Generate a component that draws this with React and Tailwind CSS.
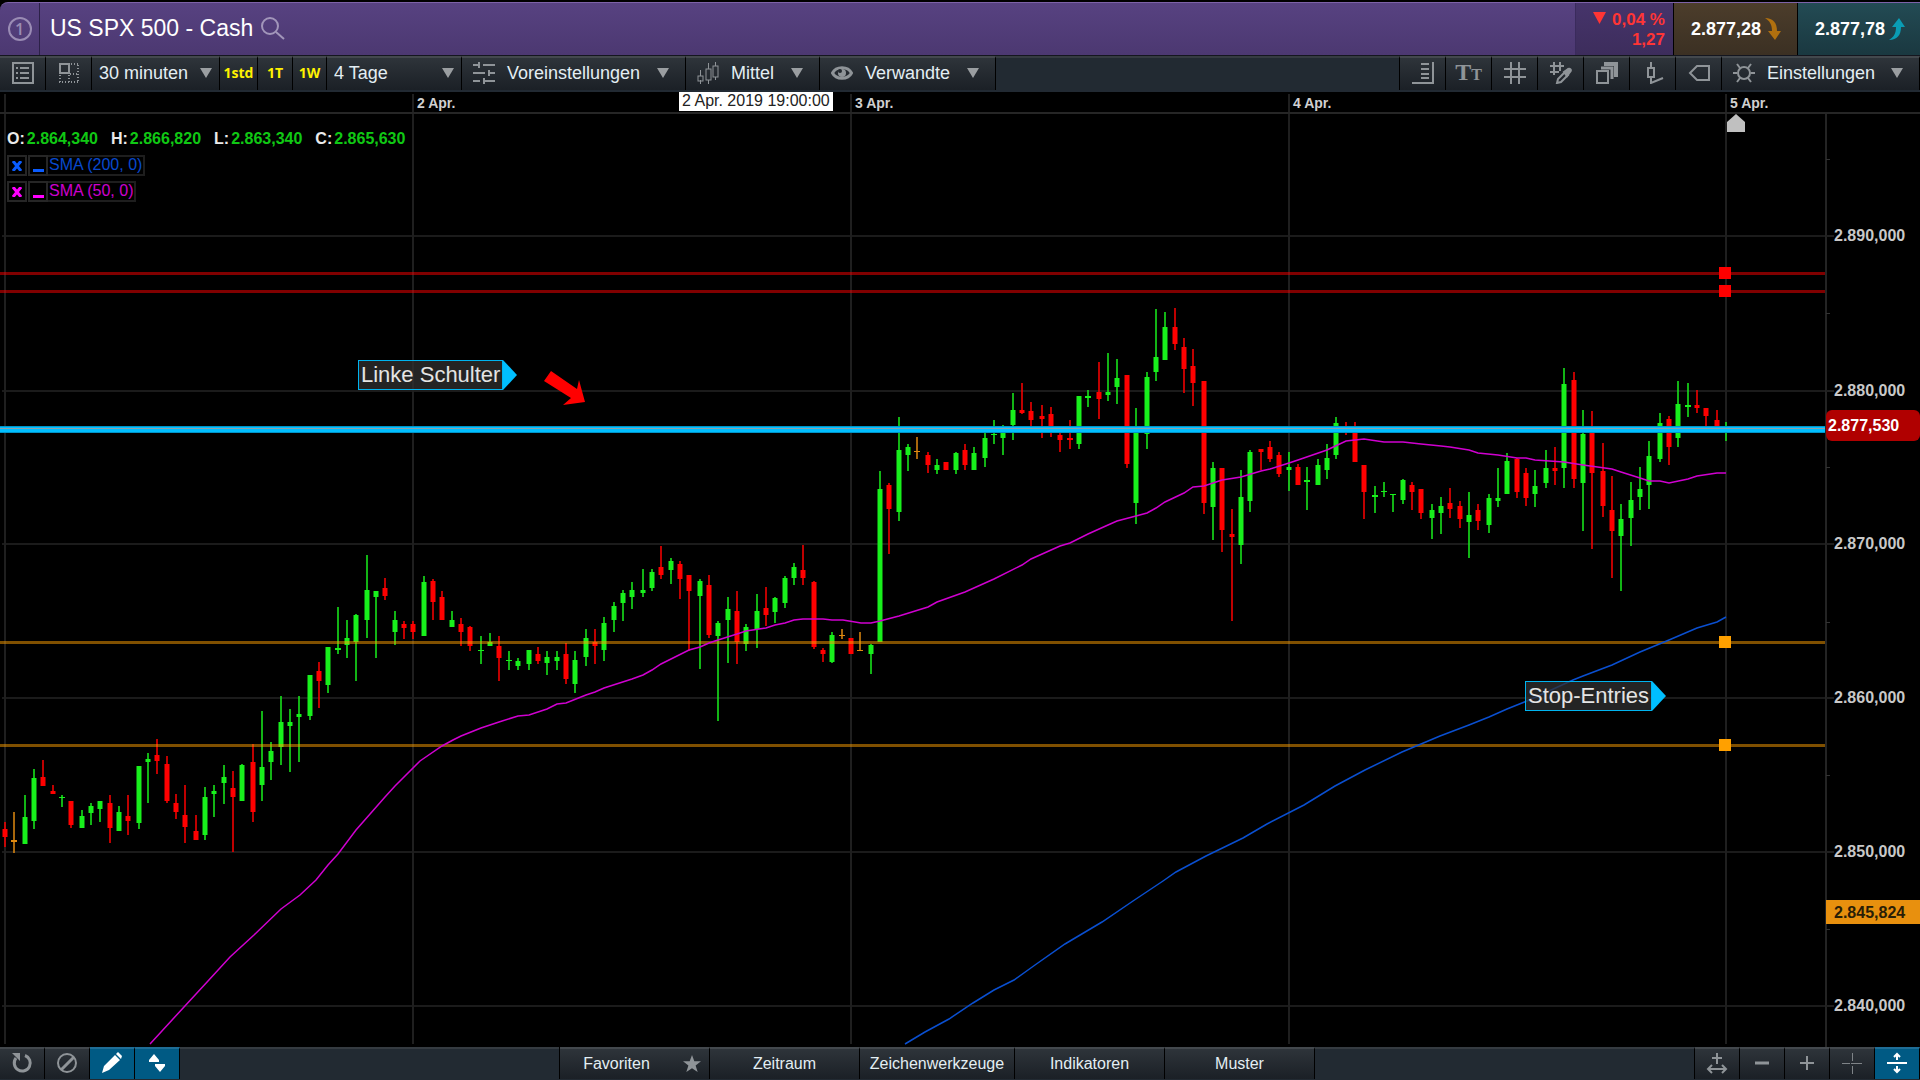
import { useState } from 'react';

// chart space: x 0..1826, y 92..1047
const CHART_W = 1826;
const CHART_TOP = 92;
const CHART_H = 955;

const left = x => `${(x / CHART_W) * 100}%`;
const top = y => `${((y - CHART_TOP) / CHART_H) * 100}%`;

const COLORS = { g: '#18f01c', r: '#ff0000', o: '#e08a10' };

// [x, high, bodyTop, bodyBottom, low, colour]
const CANDLES = [
  [5, 822, 829, 837, 847, 'r'], [14, 812, 840, 842, 853, 'o'], [25, 795, 817, 844, 844, 'g'],
  [34, 769, 778, 821, 829, 'g'], [43, 760, 777, 786, 786, 'r'], [53, 785, 791, 794, 794, 'r'],
  [62, 795, 797, 798, 807, 'g'], [71, 801, 801, 825, 828, 'r'], [82, 810, 816, 828, 828, 'g'],
  [91, 803, 806, 813, 825, 'g'], [100, 801, 801, 809, 822, 'g'], [110, 795, 803, 828, 843, 'r'],
  [119, 806, 812, 831, 831, 'g'], [128, 795, 816, 821, 835, 'r'], [139, 766, 766, 823, 829, 'g'],
  [148, 753, 759, 762, 803, 'g'], [157, 739, 755, 761, 774, 'r'], [167, 756, 764, 801, 803, 'r'],
  [176, 794, 803, 812, 819, 'r'], [185, 785, 815, 827, 843, 'r'], [196, 815, 831, 840, 840, 'r'],
  [205, 787, 797, 835, 840, 'g'], [214, 785, 791, 794, 817, 'g'], [224, 765, 777, 783, 804, 'g'],
  [233, 771, 788, 797, 852, 'r'], [242, 764, 765, 801, 801, 'g'], [253, 744, 762, 812, 822, 'r'],
  [262, 711, 767, 785, 801, 'g'], [271, 742, 751, 762, 780, 'g'], [281, 696, 722, 747, 765, 'g'],
  [290, 709, 722, 726, 772, 'g'], [299, 696, 714, 717, 762, 'g'], [310, 675, 675, 716, 720, 'g'],
  [319, 662, 671, 681, 708, 'r'], [328, 647, 647, 685, 693, 'g'], [338, 607, 648, 650, 654, 'g'],
  [347, 620, 638, 645, 658, 'g'], [356, 614, 615, 642, 681, 'g'], [367, 555, 590, 620, 638, 'g'],
  [376, 591, 591, 597, 658, 'g'], [385, 578, 588, 596, 600, 'r'], [395, 611, 620, 632, 645, 'g'],
  [404, 621, 624, 628, 639, 'r'], [413, 621, 624, 632, 639, 'r'], [424, 576, 582, 636, 636, 'g'],
  [433, 579, 581, 602, 620, 'r'], [442, 591, 597, 620, 620, 'r'], [452, 611, 620, 627, 627, 'g'],
  [461, 618, 624, 632, 646, 'r'], [470, 626, 627, 646, 651, 'r'], [481, 636, 650, 651, 664, 'g'],
  [490, 633, 642, 646, 646, 'g'], [499, 636, 646, 658, 681, 'r'], [509, 651, 660, 661, 670, 'g'],
  [518, 658, 661, 666, 670, 'g'], [529, 650, 650, 664, 670, 'g'], [538, 647, 654, 661, 664, 'r'],
  [547, 651, 657, 663, 675, 'g'], [557, 651, 657, 661, 670, 'g'], [566, 643, 654, 679, 684, 'r'],
  [575, 651, 660, 684, 693, 'g'], [586, 629, 638, 657, 666, 'g'], [595, 629, 642, 646, 664, 'r'],
  [604, 617, 623, 650, 661, 'g'], [614, 602, 606, 620, 632, 'g'], [623, 590, 593, 603, 621, 'g'],
  [632, 582, 590, 597, 609, 'g'], [643, 569, 590, 593, 597, 'g'], [652, 569, 572, 588, 591, 'g'],
  [661, 546, 567, 575, 579, 'r'], [671, 558, 561, 570, 584, 'g'], [680, 561, 564, 579, 599, 'r'],
  [689, 575, 575, 591, 651, 'r'], [700, 579, 581, 596, 669, 'g'], [709, 575, 585, 635, 638, 'r'],
  [718, 621, 623, 636, 721, 'g'], [728, 597, 609, 620, 663, 'g'], [737, 591, 611, 642, 664, 'r'],
  [746, 624, 627, 644, 651, 'g'], [757, 594, 611, 629, 648, 'g'], [766, 587, 608, 615, 626, 'r'],
  [775, 597, 598, 612, 623, 'g'], [785, 576, 578, 603, 608, 'g'], [794, 563, 567, 578, 585, 'g'],
  [803, 545, 570, 578, 585, 'r'], [814, 581, 582, 647, 649, 'r'], [823, 648, 650, 654, 662, 'r'],
  [832, 632, 635, 662, 663, 'g'], [842, 629, 635, 636, 639, 'o'], [851, 638, 638, 654, 654, 'r'],
  [860, 632, 650, 651, 651, 'o'], [871, 644, 645, 654, 674, 'g'], [880, 471, 489, 642, 642, 'g'],
  [889, 483, 485, 509, 554, 'r'], [899, 417, 450, 512, 521, 'g'], [908, 444, 447, 455, 471, 'g'],
  [917, 437, 451, 452, 459, 'o'], [928, 452, 455, 465, 473, 'r'], [937, 459, 465, 470, 474, 'g'],
  [946, 462, 462, 470, 470, 'r'], [956, 452, 453, 470, 474, 'g'], [965, 444, 450, 465, 470, 'r'],
  [974, 447, 453, 470, 470, 'g'], [985, 430, 438, 458, 467, 'g'], [994, 420, 434, 435, 444, 'g'],
  [1003, 425, 430, 438, 455, 'g'], [1013, 393, 410, 425, 440, 'g'], [1022, 383, 410, 413, 414, 'r'],
  [1031, 402, 411, 420, 428, 'r'], [1042, 405, 416, 419, 438, 'r'], [1051, 407, 414, 428, 437, 'r'],
  [1060, 432, 435, 440, 452, 'r'], [1070, 420, 438, 440, 449, 'r'], [1079, 396, 396, 444, 449, 'g'],
  [1088, 390, 396, 398, 407, 'g'], [1099, 362, 392, 399, 419, 'r'], [1108, 353, 392, 395, 401, 'g'],
  [1117, 359, 378, 387, 404, 'g'], [1127, 375, 375, 464, 468, 'r'], [1136, 408, 430, 503, 524, 'g'],
  [1147, 372, 377, 434, 449, 'g'], [1156, 309, 357, 372, 381, 'g'], [1165, 312, 327, 360, 360, 'g'],
  [1175, 308, 327, 344, 350, 'r'], [1184, 338, 347, 369, 393, 'r'], [1193, 349, 366, 383, 406, 'r'],
  [1204, 381, 381, 503, 514, 'r'], [1213, 462, 468, 507, 540, 'g'], [1222, 468, 468, 530, 552, 'r'],
  [1232, 509, 534, 537, 621, 'r'], [1241, 470, 497, 545, 564, 'g'], [1250, 450, 452, 501, 512, 'g'],
  [1261, 449, 449, 452, 470, 'r'], [1270, 441, 447, 459, 462, 'r'], [1279, 452, 455, 474, 477, 'r'],
  [1289, 452, 467, 470, 491, 'g'], [1298, 464, 467, 485, 485, 'r'], [1307, 467, 480, 482, 510, 'g'],
  [1318, 459, 465, 485, 485, 'g'], [1327, 444, 458, 470, 479, 'g'], [1336, 417, 423, 455, 459, 'g'],
  [1346, 422, 428, 430, 435, 'r'], [1355, 422, 430, 462, 462, 'r'], [1364, 465, 465, 492, 519, 'r'],
  [1375, 486, 495, 497, 513, 'g'], [1384, 482, 491, 492, 497, 'g'], [1393, 494, 494, 495, 512, 'g'],
  [1403, 479, 480, 500, 504, 'g'], [1412, 482, 485, 492, 510, 'r'], [1421, 489, 489, 513, 519, 'r'],
  [1432, 504, 510, 518, 539, 'g'], [1441, 497, 506, 513, 534, 'g'], [1450, 488, 503, 509, 518, 'r'],
  [1460, 501, 506, 519, 528, 'r'], [1469, 492, 515, 522, 558, 'g'], [1478, 504, 510, 521, 530, 'r'],
  [1489, 494, 498, 525, 533, 'g'], [1498, 468, 498, 501, 507, 'g'], [1507, 453, 461, 494, 494, 'g'],
  [1517, 458, 459, 492, 498, 'r'], [1526, 468, 473, 498, 506, 'r'], [1535, 470, 486, 494, 507, 'g'],
  [1546, 450, 468, 483, 488, 'g'], [1555, 447, 468, 471, 485, 'r'], [1564, 368, 384, 468, 488, 'g'],
  [1574, 372, 380, 479, 488, 'r'], [1583, 410, 434, 483, 531, 'g'], [1592, 411, 431, 473, 549, 'r'],
  [1603, 443, 471, 506, 517, 'r'], [1612, 476, 510, 531, 578, 'r'], [1621, 504, 519, 536, 591, 'g'],
  [1631, 482, 500, 518, 546, 'g'], [1640, 467, 489, 497, 510, 'g'], [1649, 441, 456, 485, 509, 'g'],
  [1660, 413, 423, 459, 462, 'g'], [1669, 416, 419, 447, 465, 'r'], [1678, 381, 404, 438, 447, 'g'],
  [1688, 383, 405, 407, 417, 'g'], [1697, 390, 405, 408, 413, 'r'], [1706, 408, 408, 416, 427, 'r'],
  [1717, 410, 420, 429, 429, 'r'], [1726, 422, 428, 430, 441, 'g'],
];

const SMA_50 = '150,1044 184,1007 208,981 230,957 254,935 281,909 300,895 316,880 328,865 338,854 356,830 385,797 395,786 420,761 442,746 453,740 461,736 481,728 499,722 518,716 529,715 547,709 557,704 566,703 586,695 595,692 604,688 632,679 643,675 652,670 661,664 689,650 700,647 709,643 718,640 737,634 746,631 766,628 775,625 785,623 794,620 803,619 823,619 832,620 843,620 861,623 871,623 880,621 899,616 928,607 937,602 965,592 994,579 1022,565 1031,559 1060,546 1070,543 1088,534 1108,525 1117,521 1136,516 1147,513 1156,508 1165,502 1184,493 1193,487 1204,486 1222,480 1241,477 1261,471 1270,469 1289,463 1298,460 1327,450 1346,441 1355,440 1364,439 1384,442 1403,442 1421,444 1441,446 1450,447 1469,450 1478,453 1498,455 1517,458 1526,458 1535,460 1564,462 1583,465 1612,469 1621,472 1640,478 1649,481 1660,481 1669,483 1688,479 1697,476 1717,473 1726,473';
const SMA_200 = '905,1044 925,1032 949,1019 973,1003 994,990 1014,980 1035,965 1065,944 1102,922 1133,901 1163,881 1176,872 1206,856 1243,838 1267,824 1304,805 1335,786 1365,770 1402,752 1440,736 1469,725 1489,717 1498,713 1507,709 1527,701 1573,680 1583,676 1612,665 1640,652 1669,640 1697,628 1717,622 1726,617';

const DAYS = [
  { x: 5, label: '' },
  { x: 413, label: '2 Apr.' },
  { x: 851, label: '3 Apr.' },
  { x: 1289, label: '4 Apr.' },
  { x: 1726, label: '5 Apr.' },
];

const PRICES = [
  { y: 236, label: '2.890,000' },
  { y: 391, label: '2.880,000' },
  { y: 544, label: '2.870,000' },
  { y: 698, label: '2.860,000' },
  { y: 852, label: '2.850,000' },
  { y: 1006, label: '2.840,000' },
];
const MINOR_TICKS = [159, 313, 467, 622, 775, 929];

const LEVELS = [
  { y: 273, color: '#ff0000' },
  { y: 291, color: '#ff0000' },
  { y: 642, color: '#ffa000' },
  { y: 745, color: '#ffa000' },
];

const OHLC = [
  ['O:', '2.864,340'],
  ['H:', '2.866,820'],
  ['L:', '2.863,340'],
  ['C:', '2.865,630'],
];

const CELL = 'flex items-center justify-center shrink-0 border-r border-black border-t-2 border-t-[#43484d] bg-linear-to-b from-[#2e343a] to-[#1b2026]';
const ACTIVE_CELL = 'flex items-center justify-center shrink-0 border-r border-black border-t-2 border-t-[#1f6d96] bg-[#005a84]';

function Icon({ size = 22, sw = 2, className = 'text-[#8f9498]', children }) {
  return (
    <svg
      width={size}
      height={size}
      viewBox={`0 0 ${size} ${size}`}
      fill="none"
      stroke="currentColor"
      strokeWidth={sw}
      className={`shrink-0 ${className}`}
      aria-hidden="true"
    >
      {children}
    </svg>
  );
}

function Caret({ className = '' }) {
  return (
    <svg width="12" height="10" viewBox="0 0 12 10" className={`shrink-0 ${className}`} aria-hidden="true">
      <path d="M0 0h12L6 10z" fill="#9a9ea1" />
    </svg>
  );
}

function SelectCell({ label, options, width }) {
  return (
    <div className={`${CELL} relative pb-[2px] ${width}`}>
      <select
        aria-label={label}
        className="h-full w-full appearance-none bg-transparent pl-[7px] text-lg leading-6 text-[#e3eef3] outline-none"
      >
        {options.map(o => (
          <option key={o}>{o}</option>
        ))}
      </select>
      <Caret className="pointer-events-none absolute right-[7px]" />
    </div>
  );
}

function IconButton({ label, active, width = 'w-[46px]', children }) {
  return (
    <button type="button" aria-label={label} className={`${active ? ACTIVE_CELL : CELL} pb-[2px] ${width}`}>
      {children}
    </button>
  );
}

function MenuButton({ label, width, className, children }) {
  return (
    <button type="button" aria-haspopup="menu" className={`${CELL} ${width} ${className} pb-[2px] text-lg leading-6 text-[#e3eef3]`}>
      {children}
      <span className="flex-1 text-left">{label}</span>
      <Caret />
    </button>
  );
}

function Header() {
  return (
    <header className="flex h-[53px] overflow-hidden rounded-tl-lg border-t border-[#7d62a8] bg-linear-to-b from-[#574281] to-[#4c3871]">
      <button type="button" aria-label="1" className="flex w-10 items-center justify-center border-r border-[#2c2148]">
        <span className="flex size-6 items-center justify-center rounded-full border-2 border-[#9a8cb4] font-['Open_Sans',sans-serif] text-base leading-4 font-semibold text-[#9a8cb4]">
          1
        </span>
      </button>
      <div className="flex flex-1 items-center gap-2 pb-[2px] pl-[10px]">
        <h1 className="text-[23px] leading-7 text-white">US SPX 500 - Cash</h1>
        <button type="button" aria-label="Suchen">
          <Icon size={24} className="text-[#a296ba]">
            <circle cx="9" cy="10" r="8" />
            <path d="M15 16l8 7" />
          </Icon>
        </button>
      </div>
      <div className="flex w-[98px] flex-col items-end justify-center border-l border-[#3a2b5c] bg-linear-to-b from-[#46346b] to-[#3d2d5c] pt-px pr-2 text-[17px] leading-5 font-bold text-[#ff3535]">
        <span className="flex items-center gap-[6px]">
          <svg width="13" height="12" viewBox="0 0 13 12" className="mb-1" aria-hidden="true">
            <path d="M0 0h13L6.500 12z" fill="#ff3535" />
          </svg>
          0,04 %
        </span>
        <span>1,27</span>
      </div>
      <button type="button" className="flex w-[124px] items-center gap-1 border-l border-black bg-linear-to-b from-[#4c3d2b] to-[#3b3023] pl-[17px] text-lg leading-6 font-bold text-white">
        2.877,28
        <svg width="16" height="24" viewBox="0 0 16 24" aria-hidden="true">
          <path d="M0 1C8 1 12 6 12 14h4l-6 9-7-9h4C7 8 5 4 0 1z" fill="#b0700f" />
        </svg>
      </button>
      <button type="button" className="flex w-[123px] items-center gap-1 border-l border-black bg-linear-to-b from-[#234b54] to-[#1a3840] pl-[17px] text-lg leading-6 font-bold text-white">
        2.877,78
        <svg width="16" height="24" viewBox="0 0 16 24" aria-hidden="true">
          <path d="M0 23C8 23 12 18 12 10h4l-6-9-7 9h4C7 16 5 20 0 23z" fill="#0a9cb4" />
        </svg>
      </button>
    </header>
  );
}

function Toolbar() {
  return (
    <div className="flex h-[37px] border-t border-b-2 border-t-[#14161f] border-b-[#222a33] bg-[#222a32]">
      <IconButton label="Liste">
        <Icon sw={2}>
          <rect x="1" y="1" width="20" height="20" />
          <path d="M8 6h9M8 11h9M8 16h9M4 6h2M4 11h2M4 16h2" />
        </Icon>
      </IconButton>
      <IconButton label="Layout">
        <Icon sw={2}>
          <rect x="2" y="2" width="9" height="9" />
          <path d="M13 2h8M20 3v18M1 20h19M2 13v8M11 13v8M12 12h8" strokeDasharray="1 2" />
        </Icon>
      </IconButton>
      <SelectCell label="Intervall" options={['30 minuten', '1 Stunde', '1 Tag']} width="w-32" />
      <button type="button" className={`${CELL} w-[38px] pb-[2px] font-['Open_Sans',sans-serif] text-sm font-bold text-[#fff200]`}>1std</button>
      <button type="button" className={`${CELL} w-[35px] pb-[2px] font-['Open_Sans',sans-serif] text-sm font-bold text-[#fff200]`}>1T</button>
      <button type="button" className={`${CELL} w-[34px] pb-[2px] font-['Open_Sans',sans-serif] text-sm font-bold text-[#fff200]`}>1W</button>
      <SelectCell label="Zeitraum" options={['4 Tage', '1 Woche', '1 Monat']} width="w-[135px]" />
      <MenuButton label="Voreinstellungen" width="w-[224px]" className="gap-3 pr-4 pl-[11px]">
        <Icon sw={2}>
          <path d="M0 3h7M10 3h12M6 0v6M0 11h12M17 11h5M16 8v6M0 19h7M12 19h10M11 16v6" />
        </Icon>
      </MenuButton>
      <MenuButton label="Mittel" width="w-[134px]" className="gap-3 pr-4 pl-[11px]">
        <Icon sw={1}>
          <path d="M3.500 8v6M3.500 18v4M11.500 1v6M11.500 18v4M18.500 0v4M18.500 15v3" />
          <rect x="1" y="14" width="5" height="5" />
          <rect x="9" y="7" width="5" height="11" />
          <rect x="16" y="4" width="5" height="11" />
        </Icon>
      </MenuButton>
      <MenuButton label="Verwandte" width="w-[176px]" className="gap-3 pr-4 pl-[11px]">
        <Icon sw={3}>
          <path d="M1.500 11C5 4 17 4 20.500 11C17 18 5 18 1.500 11z" />
          <circle cx="11" cy="11" r="4" fill="currentColor" stroke="none" />
          <circle cx="9" cy="9" r="2" fill="#242a30" stroke="none" />
        </Icon>
      </MenuButton>
      <div className="flex-1 border-r border-black border-t-2 border-t-[#353b41]" />
      <IconButton label="Preisskala">
        <Icon sw={2}>
          <path d="M0 21h21V0M9 2h8M9 7h8M9 12h8M9 16h8" />
        </Icon>
      </IconButton>
      <IconButton label="Schriftgröße">
        <span className="flex items-baseline font-['Liberation_Serif',serif] text-2xl leading-6 font-bold text-[#8f9498]">
          T<span className="text-base">T</span>
        </span>
      </IconButton>
      <IconButton label="Gitter">
        <Icon sw={2}>
          <path d="M7 0v22M15 0v22M0 7h22M0 15h22" />
        </Icon>
      </IconButton>
      <IconButton label="Gitterfarbe">
        <Icon sw={2}>
          <path d="M4 0v13M10 0v9M0 4h14M0 10h9" />
          <path d="M7 21l1-4 7-7 3 3-7 7-4 1z" />
          <path d="M14 10l4-3c2-1 4 1 2 3l-3 4z" fill="currentColor" />
        </Icon>
      </IconButton>
      <IconButton label="Fenster">
        <Icon sw={2}>
          <rect x="1" y="9" width="11" height="12" />
          <path d="M5 6h11v11" strokeWidth="3" />
          <path d="M8 2h12v13" strokeWidth="4" />
        </Icon>
      </IconButton>
      <IconButton label="Kerze">
        <Icon sw={2}>
          <path d="M9 0v6M9 15v6l12-5" />
          <rect x="6" y="6" width="6" height="9" />
        </Icon>
      </IconButton>
      <IconButton label="Preismarke">
        <Icon sw={2}>
          <path d="M21 4H9l-7 7 7 7h12z" />
        </Icon>
      </IconButton>
      <MenuButton label="Einstellungen" width="w-[198px]" className="gap-3 pr-4 pl-[11px]">
        <Icon sw={2}>
          <circle cx="11" cy="11" r="6" />
          <path d="M0 11h4M18 11h4M4 2l3 4M18 2l-3 4M4 20l3-4M18 20l-3-4" />
        </Icon>
      </MenuButton>
    </div>
  );
}

function SmaLegend({ label, color, border }) {
  return (
    <div className={`flex h-[21px] items-stretch text-base leading-4 ${color}`}>
      <button type="button" aria-label={`${label} entfernen`} className={`flex w-5 items-center justify-center border-2 ${border}`}>
        <svg width="10" height="10" viewBox="0 0 10 10" aria-hidden="true">
          <path d="M1 0l8 10M9 0L1 10" stroke="currentColor" strokeWidth="3" />
        </svg>
      </button>
      <button type="button" aria-label={`${label} minimieren`} className={`ml-px flex w-5 items-end justify-center border-2 pb-[2px] ${border}`}>
        <span className="h-[3px] w-[11px] bg-current" />
      </button>
      <span className={`border-2 border-l-0 px-px opacity-80 ${border}`}>{label}</span>
    </div>
  );
}

function Callout({ text, x, y }) {
  return (
    <div className="absolute flex h-[30px] items-center" style={{ left: left(x), top: top(y) }}>
      <span className="h-[30px] border border-[#00b4f0] bg-[#303030]/75 px-[2px] text-[22px] leading-7 text-[#e4e4e4]">{text}</span>
      <svg width="14" height="30" viewBox="0 0 14 30" aria-hidden="true">
        <path d="M0 0l14 15L0 30z" fill="#00bfff" />
      </svg>
    </div>
  );
}

function Plot() {
  return (
    <div className="relative min-w-0 flex-1">
      <svg
        className="absolute inset-0 h-full w-full"
        viewBox={`0 ${CHART_TOP} ${CHART_W} ${CHART_H}`}
        preserveAspectRatio="none"
        aria-hidden="true"
      >
        {/* Grid */}
        {PRICES.map(p => (
          <rect key={p.y} x="2" y={p.y - 1} width={CHART_W} height="2" fill="#1b1b1b" />
        ))}
        {DAYS.map(d => (
          <rect key={d.x} x={d.x - 1} y="94" width="2" height="950" fill="#1f1f1f" />
        ))}
        <rect x="0" y="112" width={CHART_W} height="2" fill="#262626" />

        {/* Candles */}
        {CANDLES.map(([x, high, bodyTop, bodyBottom, low, c]) => {
          const thin = bodyBottom - bodyTop <= 2;
          const w = c === 'o' || thin ? 6 : 5;
          return (
            <g key={x} fill={COLORS[c]}>
              <rect x={x - 1} y={high} width="2" height={low - high} opacity="0.75" />
              <rect x={x - w / 2} y={bodyTop} width={w} height={bodyBottom - bodyTop} />
            </g>
          );
        })}

        {/* Horizontal levels */}
        {LEVELS.map(l => (
          <g key={l.y} fill={l.color}>
            <rect x="0" y={l.y - 1} width={CHART_W} height="3" opacity="0.5" />
            <rect x="1719" y={l.y - 6} width="12" height="12" />
          </g>
        ))}

        <polyline points={SMA_200} fill="none" stroke="#0a4fd0" strokeWidth="1.5" />
        <polyline points={SMA_50} fill="none" stroke="#d000d0" strokeWidth="1.5" />

        <rect x="0" y="426" width={CHART_W} height="7" fill="#0094c8" />
        <rect x="0" y="427" width={CHART_W} height="5" fill="#00bfff" />
        <rect x="0" y="428" width={CHART_W} height="1" fill="#8f9fa8" />

        <path d="M551 371L544 381L571 398L563 405L585 402L579 380L577 389Z" fill="#ff0000" />
        <path d="M1727 132V122L1736 114L1745 122V132Z" fill="#c0c0c0" />
      </svg>

      {/* Date axis */}
      {DAYS.map(d => (
        <span
          key={d.x}
          className="absolute top-px pl-1 text-sm leading-5 font-bold text-[#d0d0d0]"
          style={{ left: left(d.x) }}
        >
          {d.label}
        </span>
      ))}
      <span
        className="absolute top-0 h-[19px] bg-white px-[3px] text-base leading-[18px] whitespace-nowrap text-[#222]"
        style={{ left: left(679) }}
      >
        2 Apr. 2019 19:00:00
      </span>

      {/* Legend */}
      <div className="absolute top-[37px] left-[7px] flex flex-col items-start">
        <dl className="mb-[6px] flex gap-[13px] text-base leading-5 font-bold">
          {OHLC.map(([k, v]) => (
            <div key={k} className="flex gap-[2px]">
              <dt className="text-[#eaeaea]">{k}</dt>
              <dd className="text-[#10c814]">{v}</dd>
            </div>
          ))}
        </dl>
        <div className="flex flex-col gap-[5px]">
          <SmaLegend label="SMA (200, 0)" color="text-[#0a5cff]" border="border-[#262626]" />
          <SmaLegend label="SMA (50, 0)" color="text-[#ff00ff]" border="border-[#262626]" />
        </div>
      </div>

      <Callout text="Linke Schulter" x={358} y={360} />
      <Callout text="Stop-Entries" x={1525} y={681} />
    </div>
  );
}

function PriceAxis() {
  return (
    <div className="relative w-[94px] shrink-0 text-base leading-5 font-bold text-[#c8c8c8]">
      <div className="absolute top-[22px] bottom-0 left-0 w-[2px] -translate-x-px bg-[#242424]" />
      <div className="absolute top-5 right-0 left-0 h-[2px] bg-[#262626]" />
      {MINOR_TICKS.map(y => (
        <span key={y} className="absolute left-0 h-px w-1 bg-[#333]" style={{ top: top(y) }} />
      ))}
      {PRICES.map(p => (
        <span key={p.y} className="absolute left-0 flex -translate-y-1/2 items-center" style={{ top: top(p.y) }}>
          <span className="h-[2px] w-2 bg-[#1f1f1f]" />
          {p.label}
        </span>
      ))}
      <span className="absolute right-0 left-0 h-[31px] rounded-md bg-[#b00000] pl-[2px] leading-8 text-white" style={{ top: top(410) }}>
        2.877,530
      </span>
      <span className="absolute right-0 left-0 h-6 bg-[#e8900e] pl-2 leading-[26px] text-[#2a1e06]" style={{ top: top(900) }}>
        2.845,824
      </span>
    </div>
  );
}

const TABS = ['Favoriten', 'Zeitraum', 'Zeichenwerkzeuge', 'Indikatoren', 'Muster'];

function BottomBar() {
  const [tab, setTab] = useState(null);

  return (
    <footer className="flex h-[33px] border-b border-[#222a32] bg-[#222a32]">
      <IconButton label="Zurücksetzen" width="w-[45px]">
        <Icon sw={3}>
          <path d="M14 3.500A8 8 0 1 1 5 6" />
          <path d="M1 1h8v8z" fill="currentColor" stroke="none" />
        </Icon>
      </IconButton>
      <IconButton label="Löschen" width="w-[45px]">
        <Icon sw={2}>
          <circle cx="11" cy="11" r="9" />
          <path d="M5 18L18 5" strokeWidth="3" />
        </Icon>
      </IconButton>
      <IconButton label="Zeichnen" active width="w-[45px]">
        <Icon className="text-white">
          <path d="M1 21l2-7L14 3l5 5L8 18z M15 2l2-2 4 4-1 3z" fill="currentColor" stroke="none" />
        </Icon>
      </IconButton>
      <IconButton label="Auf und ab" active width="w-[45px]">
        <Icon className="text-white">
          <path d="M3 8L8 2l5 6v2H3zM9 12h10v2l-5 6-5-6z" fill="currentColor" stroke="none" />
        </Icon>
      </IconButton>
      <div className="flex flex-1 border-t-2 border-t-[#353b41]" />
      <nav className="flex border-l border-black">
        {TABS.map(t => (
          <button
            key={t}
            type="button"
            aria-pressed={tab === t}
            onClick={() => setTab(t)}
            className={`${CELL} relative text-base text-[#e3eef3] ${t === 'Zeichenwerkzeuge' ? 'w-[155px]' : 'w-[150px]'} ${t === 'Favoriten' ? 'pr-9' : ''}`}
          >
            {t}
            {t === 'Favoriten' && (
              <svg width="18" height="18" viewBox="0 0 20 20" className="absolute right-2" aria-hidden="true">
                <path d="M10 0l2.600 7H20l-6 4.600L16.300 19 10 14.600 3.700 19 6 11.600 0 7h7.400z" fill="#8f9498" />
              </svg>
            )}
          </button>
        ))}
      </nav>
      <div className="flex flex-1 border-r border-black border-t-2 border-t-[#353b41]" />
      <IconButton label="Horizontal zoomen" width="w-[45px]">
        <Icon sw={2}>
          <path d="M11 1v11M6 6h10M2 17h18M6 13l-4 4 4 4M16 13l4 4-4 4" />
        </Icon>
      </IconButton>
      <IconButton label="Verkleinern" width="w-[45px]">
        <Icon sw={3}>
          <path d="M4 11h14" />
        </Icon>
      </IconButton>
      <IconButton label="Vergrößern" width="w-[45px]">
        <Icon sw={2}>
          <path d="M4 11h14M11 4v14" />
        </Icon>
      </IconButton>
      <IconButton label="Fadenkreuz" width="w-[45px]">
        <Icon sw={1} className="text-[#7e8387]">
          <path d="M1 11.500h8M13 11.500h8M11.500 1v8M11.500 14v8M10 11.500h3" />
        </Icon>
      </IconButton>
      <IconButton label="Vertikal anpassen" active width="w-[45px]">
        <Icon sw={2} className="text-white">
          <path d="M1 11h20M11 2v6M8 5l3-3 3 3M11 14v6M8 17l3 3 3-3" />
        </Icon>
      </IconButton>
    </footer>
  );
}

export default function App() {
  return (
    <div className="flex h-screen flex-col bg-black pt-[2px] font-['Liberation_Sans',Arial,sans-serif]">
      <Header />
      <Toolbar />
      <main className="flex min-h-0 flex-1">
        <Plot />
        <PriceAxis />
      </main>
      <BottomBar />
    </div>
  );
}
